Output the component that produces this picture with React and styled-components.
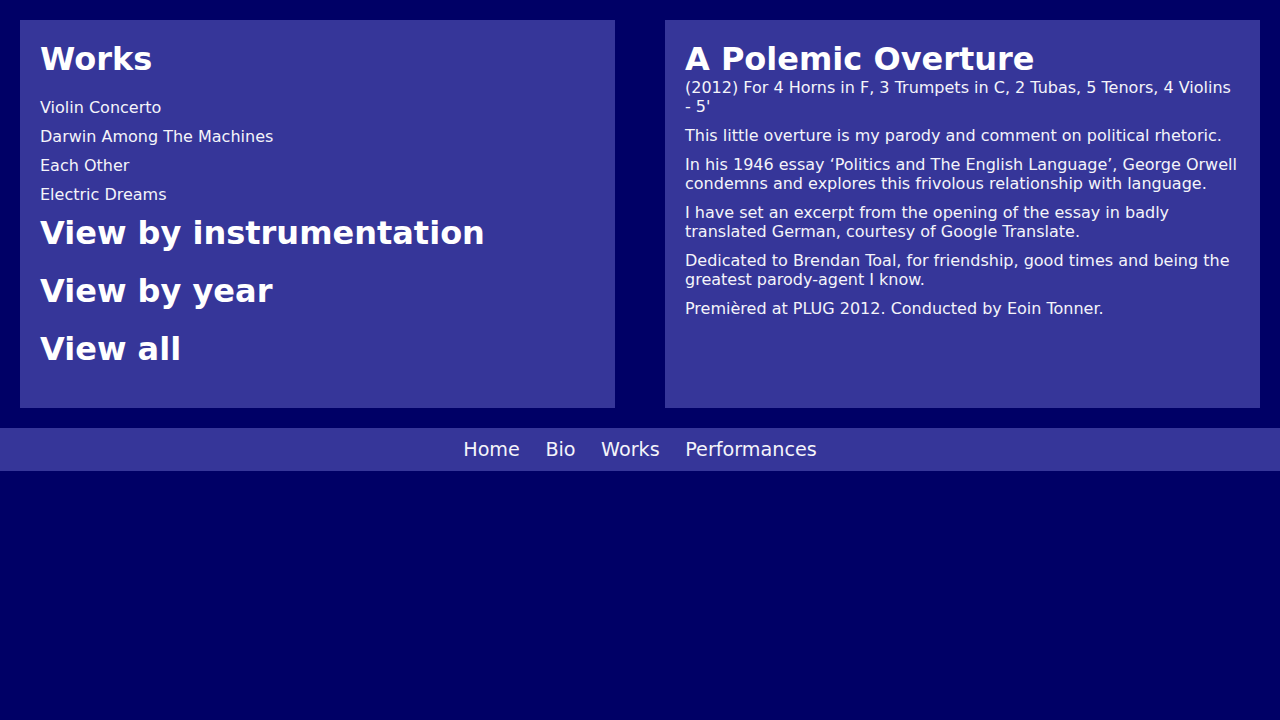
import React from 'react';
import styled, { createGlobalStyle } from 'styled-components';

const GlobalStyle = createGlobalStyle`
  html, body {
    margin: 0;
    padding: 0;
    background: #000066;
    color: #ffffff;
    font-family: "DejaVu Sans", Verdana, sans-serif;
  }
`;

const Main = styled.main`
  display: grid;
  grid-template-columns: 1fr 1fr;
  gap: 50px;
  padding: 20px 20px 0;
`;

const Panel = styled.section`
  background: #363699;
  padding: 20px 20px 19px;
  display: flex;
  flex-direction: column;
`;

const Title = styled.h1`
  margin: 0;
  font-size: 32px;
  font-weight: bold;
  color: #ffffff;
`;

const WorkList = styled.ul`
  list-style: none;
  margin: 20px 0 0;
  padding: 0;
  display: flex;
  flex-direction: column;
  gap: 10px;
`;

const WorkItem = styled.li`
  font-size: 16px;
  a {
    color: #f4f4fa;
    text-decoration: none;
  }
`;

const ViewLink = styled.a`
  display: block;
  margin: ${(p) => (p.$first ? '11px' : '0')} 0 21px;
  font-size: 32px;
  line-height: 37px;
  font-weight: bold;
  color: #ffffff;
  text-decoration: none;
`;

const Para = styled.p`
  margin: ${(p) => (p.$tight ? '0' : '10px')} 0 0;
  font-size: 16px;
  color: #f4f4fa;
`;

const Footer = styled.nav`
  margin-top: 20px;
  background: #363699;
  display: flex;
  justify-content: center;
  gap: 25.5px;
  padding: 10px 0;
`;

const FooterLink = styled.a`
  font-size: 19.2px;
  line-height: 23px;
  color: #f4f4fa;
  text-decoration: none;
`;

const works = ['Violin Concerto', 'Darwin Among The Machines', 'Each Other', 'Electric Dreams'];
const views = ['View by instrumentation', 'View by year', 'View all'];
const navItems = ['Home', 'Bio', 'Works', 'Performances'];

export default function App() {
  return (
    <>
      <GlobalStyle />
      <Main>
        <Panel>
          <Title>Works</Title>
          <WorkList>
            {works.map((w) => (
              <WorkItem key={w}>
                <a href="#">{w}</a>
              </WorkItem>
            ))}
          </WorkList>
          {views.map((v, i) => (
            <ViewLink key={v} href="#" $first={i === 0}>
              {v}
            </ViewLink>
          ))}
        </Panel>
        <Panel>
          <Title>A Polemic Overture</Title>
          <Para $tight>(2012) For 4 Horns in F, 3 Trumpets in C, 2 Tubas, 5 Tenors, 4 Violins - 5'</Para>
          <Para>This little overture is my parody and comment on political rhetoric.</Para>
          <Para>
            In his 1946 essay ‘Politics and The English Language’, George Orwell condemns and explores this
            frivolous relationship with language.
          </Para>
          <Para>
            I have set an excerpt from the opening of the essay in badly translated German, courtesy of Google
            Translate.
          </Para>
          <Para>
            Dedicated to Brendan Toal, for friendship, good times and being the greatest parody-agent I know.
          </Para>
          <Para>Premièred at PLUG 2012. Conducted by Eoin Tonner.</Para>
        </Panel>
      </Main>
      <Footer>
        {navItems.map((n) => (
          <FooterLink key={n} href="#">
            {n}
          </FooterLink>
        ))}
      </Footer>
    </>
  );
}
